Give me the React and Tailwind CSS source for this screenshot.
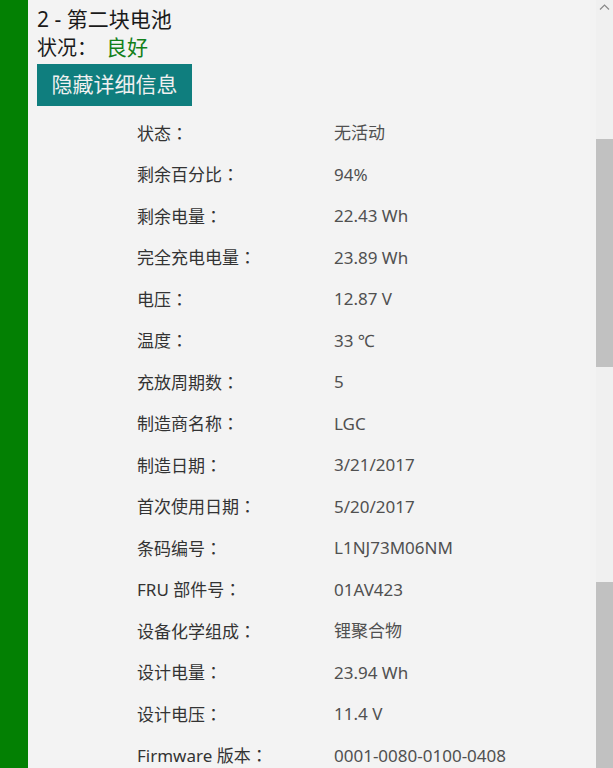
const rows = [
  ['状态', '无活动'],
  ['剩余百分比', '94%'],
  ['剩余电量', '22.43 Wh'],
  ['完全充电电量', '23.89 Wh'],
  ['电压', '12.87 V'],
  ['温度', '33 ℃'],
  ['充放周期数', '5'],
  ['制造商名称', 'LGC'],
  ['制造日期', '3/21/2017'],
  ['首次使用日期', '5/20/2017'],
  ['条码编号', 'L1NJ73M06NM'],
  ['FRU 部件号', '01AV423'],
  ['设备化学组成', '锂聚合物'],
  ['设计电量', '23.94 Wh'],
  ['设计电压', '11.4 V'],
  ['Firmware 版本', '0001-0080-0100-0408'],
]

const font = { fontFamily: '"Noto Sans", "Noto Sans CJK SC", sans-serif' }
// centred full-width colon, as in the original
const colonFont = { fontFamily: '"Noto Sans CJK JP", sans-serif' }

export default function App() {
  return (
    <div className="flex h-[768px] w-[613px] overflow-hidden bg-[#f3f3f3]" style={font}>
      {/* status strip */}
      <div className="w-[28px] shrink-0 bg-[#038003]" />

      {/* details */}
      <div className="flex-1 pl-[9px] pt-[5px]">
        <div className="text-[21px] leading-[28px] text-[#1a1a1a]">2 - 第二块电池</div>
        <div className="text-[20px] leading-[28px] text-[#1a1a1a]">
          状况：<span className="ml-[9px] text-[21px] text-[#12801a]">良好</span>
        </div>
        <button className="mt-[2px] h-[42px] w-[155px] bg-[#0f7e7e] text-[21px] text-[#f0f0f0]">
          隐藏详细信息
        </button>

        <div className="mt-[6px] pl-[100px]">
          {rows.map(([label, value]) => (
            <div key={label} className="flex h-[41.5px] items-center text-[17px]">
              <span className="w-[197px] shrink-0 text-[#333333]">
                {label}
                <span style={colonFont}>：</span>
              </span>
              <span className="text-[#505050]">{value}</span>
            </div>
          ))}
        </div>
      </div>

      {/* scrollbar */}
      <div className="flex w-[17px] shrink-0 flex-col bg-[#f0f0f0]">
        <div className="flex h-[139px] justify-center pt-[3px]">
          <svg width="11" height="8" viewBox="0 0 11 8" fill="none">
            <path d="M1 6.5 L5.5 2 L10 6.5" stroke="#8a8a8a" strokeWidth="1.2" />
          </svg>
        </div>
        <div className="h-[228px] bg-[#c1c1c1]" />
        <div className="h-[215px]" />
        <div className="flex-1 bg-[#c1c1c1]" />
      </div>
    </div>
  )
}
